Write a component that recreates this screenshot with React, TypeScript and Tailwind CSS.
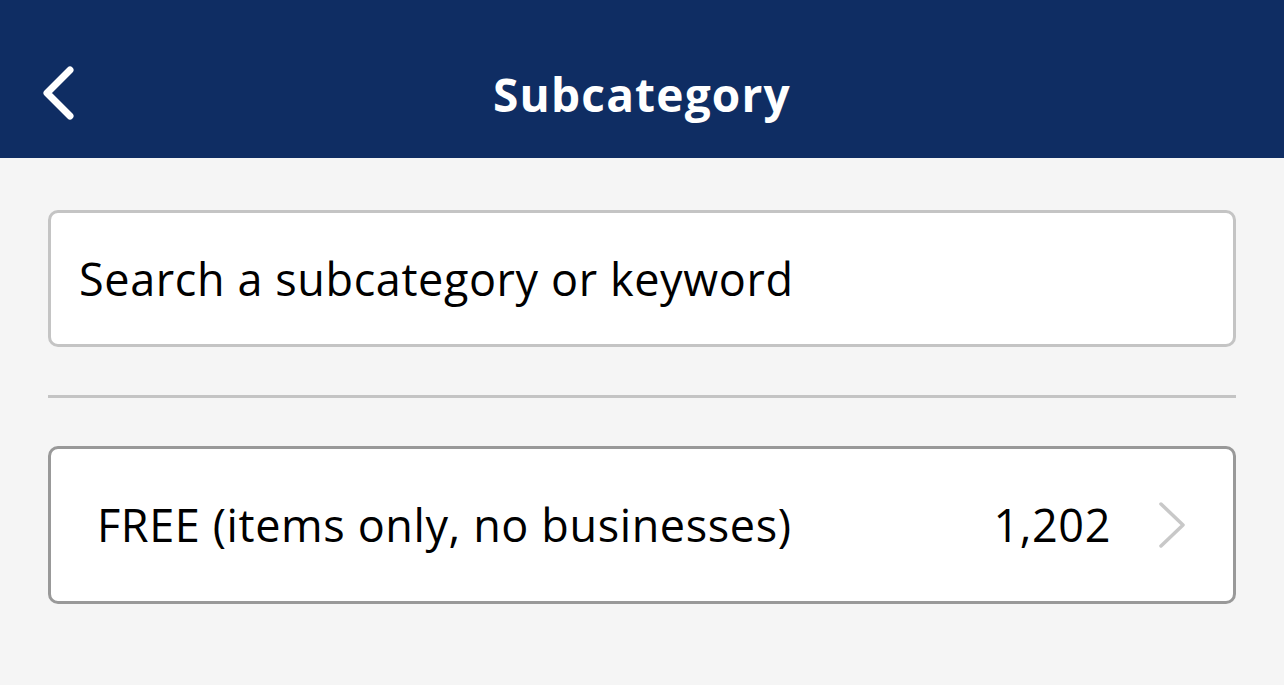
import React from 'react';

const font = { fontFamily: '"Open Sans", Lato, sans-serif' };

export default function App() {
  return (
    <div className="w-[1284px] h-[685px] bg-[#f5f5f5] overflow-hidden" style={font}>
      <header className="relative h-[158px] bg-[#0f2d63] flex items-center justify-center">
        <button className="absolute left-[36px] top-[60px] w-[44px] h-[66px] flex items-center justify-center">
          <svg width="40" height="62" viewBox="0 0 40 62" fill="none">
            <path d="M32 8 L9 31 L32 54" stroke="white" strokeWidth="7" strokeLinecap="round" strokeLinejoin="round" />
          </svg>
        </button>
        <h1 className="text-white text-[46px] font-bold tracking-[1.2px] mt-[30px] leading-none">Subcategory</h1>
      </header>

      <main className="px-[48px] pt-[52px]">
        <div className="h-[137px] bg-white border-[3px] border-[#c4c4c4] rounded-[10px] flex items-center pl-[28px]">
          <span className="text-[45px] tracking-[0.6px] text-black">Search a subcategory or keyword</span>
        </div>

        <div className="mt-[48px] h-[3px] bg-[#c4c4c4]" />

        <div className="mt-[48px] h-[158px] bg-white border-[3px] border-[#999999] rounded-[10px] flex items-center pl-[46px] pr-[46px]">
          <span className="text-[45px] tracking-[0.6px] text-black flex-1">FREE (items only, no businesses)</span>
          <span className="text-[45px] tracking-[0.6px] text-black">1,202</span>
          <svg className="ml-[46px]" width="30" height="50" viewBox="0 0 30 50" fill="none">
            <path d="M4 4 L26 25 L4 46" stroke="#c8c8c8" strokeWidth="3.5" strokeLinecap="round" strokeLinejoin="round" />
          </svg>
        </div>
      </main>
    </div>
  );
}
